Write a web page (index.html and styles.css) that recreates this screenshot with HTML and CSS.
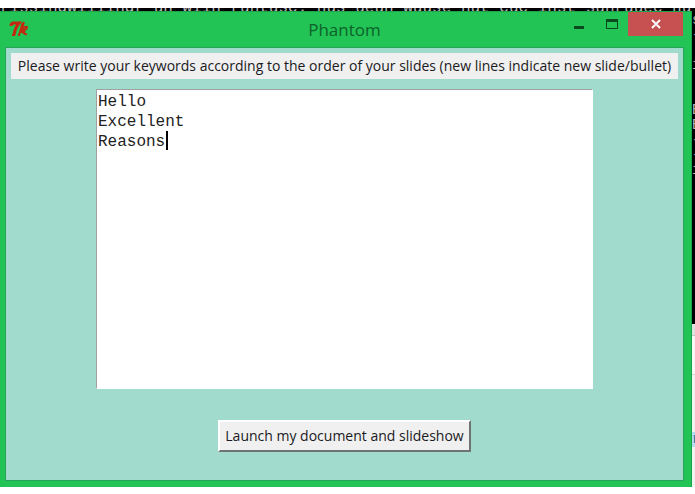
FILE: index.html
```html
<!DOCTYPE html>
<html lang="en">
<head>
<meta charset="utf-8">
<title>Phantom</title>
<link rel="stylesheet" href="styles.css">
</head>
<body>
<div class="desktop">
  <div class="console-top" aria-hidden="true"><span>rissindwiiiindr un wiin runtusc. nus ueun wuuse nut cuc inst sunruuec nu</span></div>
  <div class="workspace">
    <main class="window">
      <header class="titlebar">
        <svg class="app-icon" viewBox="0 0 20 16" aria-hidden="true">
          <path class="thick" d="M2 5Q2 2 5 2L10 2Q6 7 5 14"/>
          <path d="M3 14h3M15 1Q12 7 10 14M9 14h2M12 9Q16 5 18 6Q18 9 12 10M14 10Q15 14 18 13"/>
          <path class="thick" d="M12 10L16 12M14 2L13 6"/>
        </svg>
        <h1 class="title">Phantom</h1>
        <div class="controls">
          <button class="control" aria-label="Minimize"><svg viewBox="0 0 12 12" aria-hidden="true"><path d="M1 8h10v3H1z"/></svg></button>
          <button class="control" aria-label="Maximize"><svg viewBox="0 0 12 12" aria-hidden="true"><path fill-rule="evenodd" d="M0 1h12v10H0zM1 4v6h10V4z"/></svg></button>
          <button class="control close" aria-label="Close"><svg viewBox="0 0 12 12" aria-hidden="true"><path d="M2 2l8 8M10 2l-8 8"/></svg></button>
        </div>
      </header>
      <div class="client">
        <label class="prompt" for="keywords">Please write your keywords according to the order of your slides (new lines indicate new slide/bullet)</label>
        <div class="editor">
          <textarea id="keywords" class="keywords" spellcheck="false">Hello
Excellent
Reasons</textarea>
          <span class="caret" aria-hidden="true"></span>
        </div>
        <button class="launch">Launch my document and slideshow</button>
      </div>
    </main>
    <div class="console-side" aria-hidden="true">
      <div class="console-dark">s
-

i


E
E
-
-
i</div>
      <div class="pane-head"></div>
      <div class="pane-tabs"></div>
      <div class="pane-body"><span>r</span></div>
    </div>
  </div>
</div>
</body>
</html>
```
FILE: styles.css
```css
* { box-sizing: border-box; }

body {
  margin: 0;
  background: #fff;
  font-family: "Open Sans", "Noto Sans", sans-serif;
}

.desktop {
  display: flex;
  flex-direction: column;
  height: 100vh;
  padding: 8px 0 7px;
}

.console-top {
  display: flex;
  align-items: flex-end;
  flex: 0 0 3px;
  overflow: hidden;
  background: #000;
  color: #bbb;
  font: 16px/12px "Liberation Mono", monospace;
  white-space: pre;
}

.console-top span { margin-bottom: -3px; }

.workspace {
  display: flex;
  flex: 1;
  min-height: 0;
}

.window {
  display: flex;
  flex-direction: column;
  flex: 1;
  min-width: 0;
  padding: 0 8px 7px 6px;
  background: #23c456;
  border: 1px solid #1ba548;
  border-width: 1px 1px 0 0;
}

.titlebar {
  display: grid;
  grid-template-columns: 1fr auto 1fr;
  height: 36px;
}

.app-icon {
  width: 20px;
  height: 16px;
  margin: 9px 0 0 3px;
  fill: none;
  stroke: #c22a10;
  stroke-width: 2;
}

.app-icon .thick { stroke-width: 3; }

.title {
  margin: 0;
  color: #0d6229;
  font-size: 17px;
  font-weight: 400;
  line-height: 36px;
}

.controls {
  display: flex;
  justify-content: flex-end;
}

.control {
  display: grid;
  place-items: center;
  width: 33px;
  height: 24px;
  padding: 0;
  border: 0;
  background: none;
}

.control svg {
  width: 12px;
  height: 12px;
  fill: #0b4a1e;
}

.close {
  width: 55px;
  background: #c75050;
}

.close svg {
  fill: none;
  stroke: #fff;
  stroke-width: 2;
}

.client {
  display: flex;
  flex-direction: column;
  align-items: center;
  flex: 1;
  min-height: 0;
  padding: 5px 5px 0;
  background: #a0dbcd;
  outline: 1px solid #28a35a;
}

.prompt {
  width: 100%;
  height: 26px;
  background: #f0f0f0;
  color: #1a1a22;
  font-size: 14px;
  line-height: 26px;
  text-align: center;
  white-space: nowrap;
}

.editor {
  position: relative;
  width: calc(100% - 170px);
  height: 300px;
  margin: 10px 0 31px;
}

.keywords {
  display: block;
  width: 100%;
  height: 100%;
  padding: 2px 1px;
  border: 1px solid #fff;
  border-top-color: #a0a0a0;
  border-left-color: #a0a0a0;
  outline: 0;
  resize: none;
  background: #fff;
  color: #222;
  font: 16px/20px "Liberation Mono", monospace;
}

.caret {
  position: absolute;
  top: 42px;
  left: 70px;
  width: 2px;
  height: 19px;
  background: #000;
}

.launch {
  height: 32px;
  padding: 0 5px;
  border: 2px solid;
  border-color: #fff #6f7473 #6f7473 #fff;
  background: #f0f0f0;
  color: #1a1a22;
  font: 14px/26px "Open Sans", "Noto Sans", sans-serif;
  white-space: nowrap;
}

.console-side {
  display: flex;
  flex-direction: column;
  flex: 0 0 3px;
  overflow: hidden;
  font: 14px/15px "Liberation Mono", monospace;
}

.console-dark {
  flex: 0 0 313px;
  padding-top: 2px;
  background: #000;
  color: #bbb;
  white-space: pre;
}

.pane-head {
  flex: 0 0 12px;
  background: #dfe3df;
  border-bottom: 1px solid #c2c8c2;
}

.pane-tabs {
  flex: 0 0 39px;
  background: #f6f8f6;
  border-bottom: 1px solid #d0d4d0;
}

.pane-body {
  flex: 1;
  padding-top: 57px;
  background: #f0f3f0;
}

.pane-body span {
  display: block;
  background: #b4dcf0;
  color: #2c6e9c;
}
```
